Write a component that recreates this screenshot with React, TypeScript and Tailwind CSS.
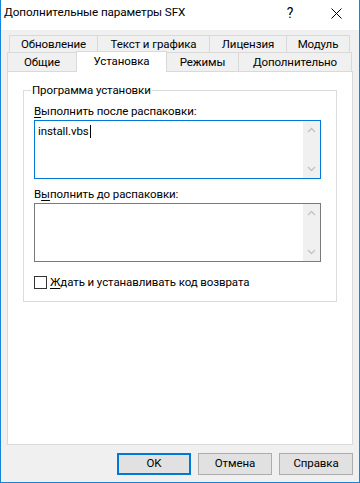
import React from 'react';

const font = "font-['Roboto','Liberation_Sans',Arial,sans-serif]";

function Tab({ label, width, last = false, tall = false }: { label: string; width: number; last?: boolean; tall?: boolean }) {
  return (
    <div
      className={`flex justify-center border-l border-t border-[#d9d9d9] bg-[#f0f0f0] ${last ? 'border-r' : ''} ${
        tall ? 'h-[19px] pt-[2px]' : 'h-[17px] pt-[1px]'
      }`}
      style={{ width }}
    >
      <span className="leading-[14px]">{label}</span>
    </div>
  );
}

function ScrollArrows() {
  return (
    <div className="flex w-[17px] flex-col justify-between bg-[#f0f0f0] py-[6px]">
      <svg width="17" height="6" viewBox="0 0 17 6">
        <polyline points="5,5 8.5,1.5 12,5" fill="none" stroke="#c2c2c2" strokeWidth="1.3" />
      </svg>
      <svg width="17" height="6" viewBox="0 0 17 6">
        <polyline points="5,1 8.5,4.5 12,1" fill="none" stroke="#c2c2c2" strokeWidth="1.3" />
      </svg>
    </div>
  );
}

function Button({ label, primary = false }: { label: string; primary?: boolean }) {
  return (
    <button
      className={`flex h-[22px] w-[74px] items-center justify-center bg-[#e1e1e1] ${
        primary ? 'border-2 border-[#0078d7]' : 'border border-[#adadad]'
      }`}
    >
      {label}
    </button>
  );
}

export default function App() {
  return (
    <div className={`${font} flex h-[483px] w-[360px] flex-col border-x border-b border-[#1883d7] bg-[#f0f0f0] text-[11.5px] tracking-[-0.1px] text-black`}>
      {/* title bar */}
      <div className="flex h-[30px] items-center bg-white">
        <span className="flex-1 pl-[3px] pb-[4px] text-[11.7px]">Дополнительные параметры SFX</span>
        <div className="flex h-full w-[46px] items-center justify-center pb-[4px] text-[14px]">?</div>
        <div className="flex h-full w-[46px] items-center justify-center pb-[4px]">
          <svg width="11" height="11" viewBox="0 0 11 11">
            <path d="M0.5 0.5 L10.5 10.5 M10.5 0.5 L0.5 10.5" stroke="#000" strokeWidth="1" />
          </svg>
        </div>
      </div>

      <div className="flex flex-1 flex-col px-[6px] pt-[5px]">
        {/* tab rows */}
        <div className="flex pl-[2px]">
          <Tab label="Обновление" width={88} />
          <Tab label="Текст и графика" width={112} />
          <Tab label="Лицензия" width={77} />
          <Tab label="Модуль" width={64} last />
        </div>
        <div className="flex h-[19px] items-start">
          <Tab label="Общие" width={69} tall />
          <div className="relative z-10 -mt-[1px] flex h-[21px] w-[91px] justify-center border-x border-t border-[#d9d9d9] bg-white pt-[2px]">
            <span className="leading-[14px]">Установка</span>
          </div>
          <div className="-ml-[1px]">
            <Tab label="Режимы" width={72} tall />
          </div>
          <Tab label="Дополнительно" width={114} last tall />
        </div>

        {/* panel */}
        <div className="h-[374px] border border-[#d9d9d9] bg-white pl-[15px] pt-[18px]">
          <div className="relative h-[212px] w-[314px] border border-[#dcdcdc] px-[10px] pt-[13px]">
            <span className="absolute -top-[9px] left-[7px] bg-white px-[1px] leading-[16px]">Программа установки</span>
            <div className="leading-[15px]">
              <span className="underline underline-offset-2">В</span>ыполнить после распаковки:
            </div>
            <div className="mt-[1px] flex h-[59px] w-[287px] border border-[#0078d7]">
              <div className="flex flex-1 items-start pl-[3px] pt-[3px]">
                <span className="leading-[15px]">install.vbs</span>
                <span className="mt-[1px] ml-[1px] h-[13px] w-[1px] bg-black" />
              </div>
              <ScrollArrows />
            </div>
            <div className="mt-[8px] leading-[15px]">
              В<span className="underline underline-offset-2">ы</span>полнить до распаковки:
            </div>
            <div className="mt-[1px] flex h-[59px] w-[287px] border border-[#7a7a7a]">
              <div className="flex-1" />
              <ScrollArrows />
            </div>
            <div className="mt-[13px] flex items-center gap-[3px]">
              <span className="h-[13px] w-[13px] border border-[#333] bg-white" />
              <span className="leading-[15px]">
                <span className="underline underline-offset-2">Ж</span>дать и устанавливать код возврата
              </span>
            </div>
          </div>
        </div>

        {/* buttons */}
        <div className="mt-[8px] flex justify-end gap-[7px]">
          <Button label="OK" primary />
          <Button label="Отмена" />
          <Button label="Справка" />
        </div>
      </div>
    </div>
  );
}
